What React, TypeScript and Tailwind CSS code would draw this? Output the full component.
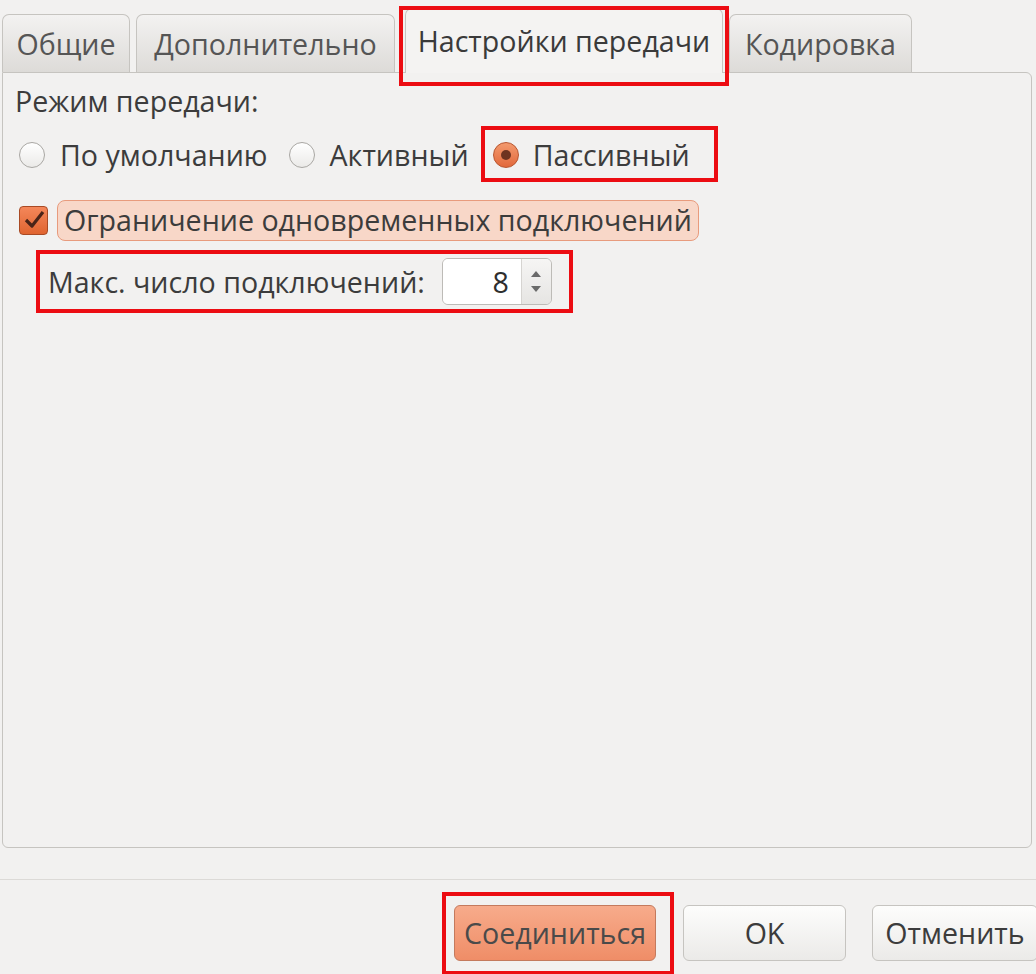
import React from 'react';

const font = { fontFamily: '"Open Sans", "Noto Sans", "DejaVu Sans", sans-serif' };

// red annotation frame drawn over a widget
const Mark: React.FC<{ className: string }> = ({ className }) => (
  <div className={`pointer-events-none absolute border-[4px] border-[#ec0c12] ${className}`} />
);

const Tab: React.FC<{ label: string; w: string }> = ({ label, w }) => (
  <div
    className={`${w} h-[58px] shrink-0 flex items-center justify-center rounded-t-[7px] border border-b-0 border-[#c6c4c0] bg-gradient-to-b from-[#f3f2f1] to-[#dddbd8] text-[#555555]`}
  >
    {label}
  </div>
);

const Radio: React.FC<{ checked?: boolean }> = ({ checked }) =>
  checked ? (
    <span className="w-[26px] h-[26px] shrink-0 rounded-full border border-[#b8552e] bg-gradient-to-b from-[#f39a6e] to-[#e2683a] flex items-center justify-center">
      <span className="w-[10px] h-[10px] rounded-full bg-[#6e3320]" />
    </span>
  ) : (
    <span className="w-[26px] h-[26px] shrink-0 rounded-full border border-[#a9a7a3] bg-gradient-to-b from-[#ffffff] to-[#ebeae8]" />
  );

export default function App() {
  return (
    <div
      className="w-[1036px] h-[974px] bg-[#f2f1f0] overflow-hidden text-[28.6px] leading-[36px] text-[#3c3c3c] whitespace-nowrap"
      style={font}
    >
      {/* tab strip */}
      <div className="flex items-end h-[72px] pl-[2px]">
        <Tab label="Общие" w="w-[128px]" />
        <div className="w-[6px] shrink-0" />
        <Tab label="Дополнительно" w="w-[259px]" />
        <div className="relative ml-[10px] w-[318px] h-[65px] shrink-0 -mb-[1px] z-10 flex items-center justify-center rounded-t-[7px] border border-b-0 border-[#c6c4c0] bg-[#f4f3f2] text-[#3a3a3a]">
          Настройки передачи
          <Mark className="-left-[7px] -right-[7px] -top-[3px] -bottom-[13px]" />
        </div>
        <div className="w-[6px] shrink-0" />
        <Tab label="Кодировка" w="w-[183px]" />
      </div>

      {/* page */}
      <div className="ml-[2px] w-[1030px] h-[776px] border border-[#c6c4c0] rounded-b-[6px] rounded-tr-[6px] bg-[#f2f1f0] pl-[12px] pt-[10px]">
        <div className="h-[36px] flex items-center">Режим передачи:</div>

        <div className="flex items-center h-[36px] mt-[18px] pl-[4px]">
          <label className="flex items-center gap-[15px]">
            <Radio />
            <span>По умолчанию</span>
          </label>
          <label className="flex items-center gap-[15px] ml-[21px]">
            <Radio />
            <span>Активный</span>
          </label>
          <label className="relative flex items-center gap-[14px] ml-[24px]">
            <Radio checked />
            <span>Пассивный</span>
            <Mark className="-left-[12px] -right-[28px] -top-[11px] -bottom-[9px]" />
          </label>
        </div>

        <div className="flex items-center h-[42px] mt-[26px] pl-[4px]">
          <span className="w-[29px] h-[29px] shrink-0 rounded-[4px] border border-[#a94a24] bg-gradient-to-b from-[#f4875a] to-[#e0642f] flex items-center justify-center">
            <svg width="22" height="20" viewBox="0 0 22 20">
              <path d="M3 10 L9 16 L20 2" fill="none" stroke="#4a2418" strokeWidth="3.2" strokeLinejoin="round" />
            </svg>
          </span>
          <span className="ml-[9px] h-[41px] flex items-center px-[6px] rounded-[8px] border border-[#e89b7d] bg-[#f8d7c8]">
            Ограничение одновременных подключений
          </span>
        </div>

        <div className="relative flex items-center ml-[33px] mt-[17px] h-[47px] w-[507px]">
          <span>Макс. число подключений:</span>
          <div className="ml-[17px] flex h-[47px] w-[110px] shrink-0 rounded-[6px] border border-[#bdbbb7] overflow-hidden">
            <div className="flex-1 bg-white flex items-center justify-end pr-[12px] text-[#2e2e2e]">8</div>
            <div className="w-[30px] border-l border-[#d6d4d1] bg-gradient-to-b from-[#f6f5f4] to-[#e6e5e3] flex flex-col items-center justify-center gap-[9px]">
              <svg width="10" height="6" viewBox="0 0 10 6"><path d="M0 6 L5 0 L10 6 Z" fill="#6a6a6a" /></svg>
              <svg width="10" height="6" viewBox="0 0 10 6"><path d="M0 0 L5 6 L10 0 Z" fill="#6a6a6a" /></svg>
            </div>
          </div>
          <Mark className="-left-[12px] -right-[18px] -top-[8px] -bottom-[8px]" />
        </div>
      </div>

      {/* action area */}
      <div className="mt-[31px] border-t border-[#dcdad7]" />
      <div className="flex items-center pt-[25px] pl-[454px]">
        <div className="relative shrink-0">
          <button className="w-[202px] h-[56px] rounded-[6px] border border-[#c47a5d] bg-gradient-to-b from-[#f7ab8b] to-[#ef8d67] text-[#4a4a4a]">
            Соединиться
          </button>
          <Mark className="-left-[12px] -right-[18px] -top-[13px] -bottom-[14px]" />
        </div>
        <button className="ml-[27px] w-[163px] h-[56px] shrink-0 rounded-[6px] border border-[#c6c4c0] bg-gradient-to-b from-[#fdfdfc] to-[#ebeae8] text-[#3c3c3c]">
          OK
        </button>
        <button className="ml-[26px] w-[166px] h-[56px] shrink-0 rounded-[6px] border border-[#c6c4c0] bg-gradient-to-b from-[#fdfdfc] to-[#ebeae8] text-[#3c3c3c]">
          Отменить
        </button>
      </div>
    </div>
  );
}
